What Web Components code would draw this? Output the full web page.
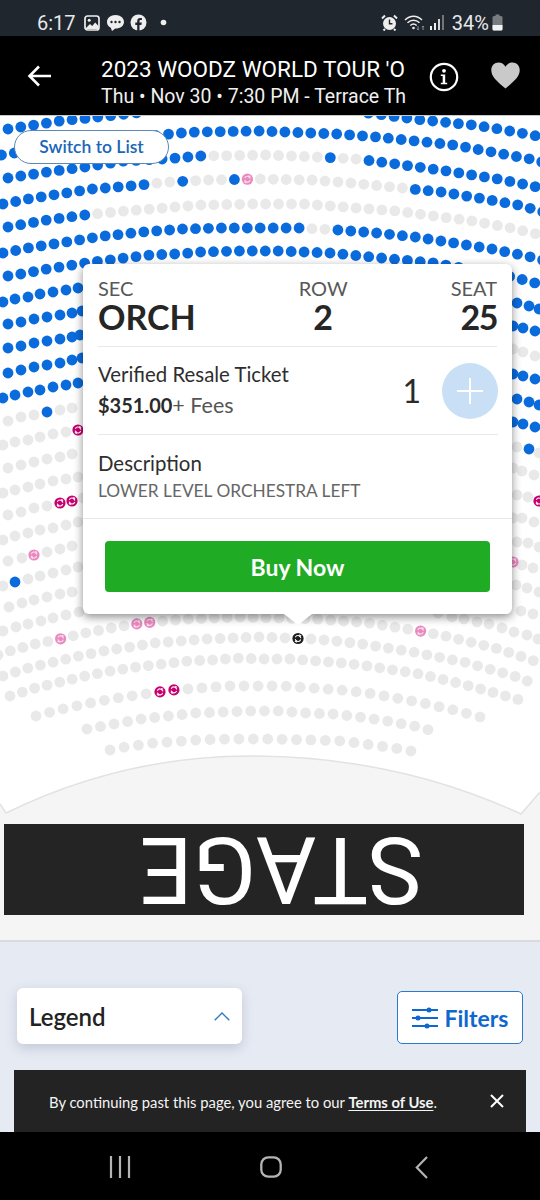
<!DOCTYPE html>
<html>
<head>
<meta charset="utf-8">
<style>
  html, body { margin: 0; padding: 0; }
  body { width: 540px; height: 1200px; overflow: hidden; background: #e6eaf3; font-family: Lato, sans-serif; display: flex; flex-direction: column; }
</style>
</head>
<body>
<status-bar></status-bar>
<event-header></event-header>
<seat-map>
  <seat-card></seat-card>
</seat-map>
<map-controls></map-controls>
<terms-bar></terms-bar>
<nav-bar></nav-bar>

<script>
class StatusBar extends HTMLElement {
  constructor() {
    super();
    this.attachShadow({ mode: "open" });
    this.shadowRoot.innerHTML = `
      <style>
        :host { display: flex; height: 36px; background: #1f262d; color: #e6e8ea; align-items: center; justify-content: space-between; padding: 9px 37px 0; box-sizing: border-box; font: 20px Roboto, sans-serif; flex: none; }
        .side { display: flex; align-items: center; }
        svg { display: block; }
      </style>
      <div class="side">
        <span>6:17</span>
        <svg style="margin-left:8px" width="16" height="16" viewBox="0 0 16 16"><rect x="1" y="1" width="14" height="14" rx="2.5" fill="none" stroke="#eee" stroke-width="1.7"/><circle cx="5.2" cy="5.2" r="1.5" fill="#eee"/><path d="M2 13l4-4 2.2 2 3-3.5L14.5 11v3H2z" fill="#eee"/></svg>
        <svg style="margin-left:6px" width="19" height="18" viewBox="0 0 19 18"><path d="M9.5 1C4.5 1 1 4 1 8c0 2.700 1.500 4.600 3.800 5.800L6 17l3.300-2.500h.2c5 0 8.500-2.700 8.500-6.500S14.500 1 9.500 1z" fill="#eee"/><circle cx="5.500" cy="8" r="1.200" fill="#1f262d"/><circle cx="9.500" cy="8" r="1.200" fill="#1f262d"/><circle cx="13.500" cy="8" r="1.200" fill="#1f262d"/></svg>
        <svg style="margin-left:5px" width="17" height="17" viewBox="0 0 17 17"><circle cx="8.500" cy="8.500" r="8" fill="#eee"/><path d="M7.200 17v-6H5.300V8.600h1.900V7c0-2 1.200-3.100 3-3.100.8 0 1.500.1 1.700.1v2.100h-1.200c-.9 0-1.200.5-1.200 1.200v1.300h2.300L11.400 11H9.500v6z" fill="#1f262d"/></svg>
        <svg style="margin-left:13px" width="7" height="7"><circle cx="3.500" cy="3.500" r="2.800" fill="#eee"/></svg>
      </div>
      <div class="side">
        <svg width="17" height="17" viewBox="0 0 17 17"><circle cx="8.500" cy="9.500" r="6.500" fill="#eee"/><path d="M8.500 5.500v4.300h3" fill="none" stroke="#1f262d" stroke-width="1.400"/><path d="M1 4.500L4 1.500M16 4.500L13 1.500M4 15l-1.500 1.500M13 15l1.500 1.500" stroke="#eee" stroke-width="2"/></svg>
        <svg style="margin-left:6px" width="22" height="17" viewBox="0 0 22 17"><path d="M1 6c5-5 12-5 17 0M3.500 8.800c3.500-3.300 8.500-3.300 12 0M6.300 11.500c2-1.800 4.400-1.800 6.400 0" fill="none" stroke="#eee" stroke-width="1.500"/><circle cx="9.500" cy="14" r="1.300" fill="#eee"/><path d="M14 12v4M13 14.800l1 1.200 1-1.200" fill="none" stroke="#8b9095" stroke-width="1"/><path d="M19 16v-4M18 13.200l1-1.200 1 1.200" fill="none" stroke="#8b9095" stroke-width="1"/></svg>
        <svg style="margin-left:4px" width="15" height="17" viewBox="0 0 15 17"><rect x="0" y="12" width="2" height="4" fill="#eee"/><rect x="4" y="9" width="2" height="7" fill="#eee"/><rect x="8" y="5" width="2" height="11" fill="#d4d6d8"/><rect x="12" y="1" width="2" height="15" fill="#70767b"/></svg>
        <span style="margin-left:7px">34%</span>
        <svg style="margin-left:3px" width="11" height="17" viewBox="0 0 11 17"><rect x="3.500" y="0.500" width="4" height="2" fill="#777c81"/><rect x="0.500" y="2" width="10" height="14.500" rx="1.500" fill="#777c81"/><path d="M0.500 11h10v4a1.500 1.500 0 0 1-1.500 1.500H2A1.500 1.500 0 0 1 .5 15z" fill="#f2f2f2"/></svg>
      </div>`;
  }
}
customElements.define("status-bar", StatusBar);

class EventHeader extends HTMLElement {
  constructor() {
    super();
    this.attachShadow({ mode: "open" });
    this.shadowRoot.innerHTML = `
      <style>
        :host { display: flex; height: 80px; background: #000; color: #fff; align-items: center; box-sizing: border-box; border-bottom: 1px solid #c9c9c9; font-family: Roboto, sans-serif; flex: none; position: relative; z-index: 2; }
        .back { margin-left: 27px; width: 26px; flex: none; display: block; }
        .titles { margin-left: 48px; width: 305px; overflow: hidden; white-space: nowrap; flex: none; padding-top: 15px; }
        .t1 { font-size: 22.500px; line-height: 28px; }
        .t2 { font-size: 19.500px; line-height: 28px; color: #f0f0f0; }
        .info { margin-left: 23px; margin-top: 2px; flex: none; display: block; }
        .heart { margin-left: 32px; flex: none; display: block; }
      </style>
      <svg class="back" height="24" viewBox="0 0 26 24"><path d="M24 12H3M12 2.500L2.500 12l9.500 9.500" fill="none" stroke="#fff" stroke-width="2.600"/></svg>
      <div class="titles">
        <div class="t1">2023 WOODZ WORLD TOUR 'O</div>
        <div class="t2">Thu • Nov 30 • 7:30 PM - Terrace Th</div>
      </div>
      <svg class="info" width="30" height="30" viewBox="0 0 30 30"><circle cx="15" cy="15" r="13.200" fill="none" stroke="#fff" stroke-width="2.200"/><circle cx="15" cy="8.800" r="1.900" fill="#fff"/><path d="M11.800 12.500h4.400v8.200h2v1.600h-6.400v-1.600h1.900v-6.600h-1.900z" fill="#fff"/></svg>
      <svg class="heart" width="29" height="27" viewBox="0 0 29 27"><path d="M14.500 26.500C5 18.500 0.300 14.500 0.300 8 0.300 3.500 3.500.5 7.500.5c3 0 5.500 1.500 7 4.200 1.500-2.700 4-4.200 7-4.200 4 0 7.200 3 7.200 7.500 0 6.500-4.700 10.500-14.200 18.500z" fill="#c9c9c9"/></svg>`;
  }
}
customElements.define("event-header", EventHeader);

// seat colours on the map
const SEAT = { b: "#0a6bdc", g: "#e9e9e9", d: "#c6006f", l: "#e98abf", k: "#1e1e1e" };

// rows that run across the map: pts is the curve, step the distance between seats,
// colors is a list of [up to this x, colour]
const ROWS = [
  { step: 12.95, pts: [[8,129],[60,121],[136,113],[150,110],[270,103],[355,110],[368,113],[422,120],[473,125],[499,129],[537,136],[550,139]], colors: [[999,"b"]] },
  { step: 12.95, pts: [[1.500,155],[14,153],[60,146],[169,134],[195,132],[260,131],[286,132],[338,134],[377,137],[415,141],[454,145],[492,152],[530,159],[550,164]], colors: [[999,"b"]] },
  { step: 12.95, pts: [[8,178],[21,176],[47,172],[85,167],[124,161],[163,159],[201,156],[266,155],[318,157],[357,159],[396,164],[447,171],[498,179],[537,187],[550,190]], colors: [[207,"b"],[325,"g"],[337,"b"],[363,"g"],[999,"b"]] },
  { step: 12.95, pts: [[3,204],[28,199],[53,195],[92,189],[130,186],[169,182],[208,180],[260,179],[312,180],[351,183],[402,188],[441,192],[479,198],[518,205],[540,211],[552,214]], colors: [[150,"b"],[176,"g"],[188,"b"],[228,"g"],[241,"b"],[254,"l"],[408,"g"],[999,"b"]] },
  { step: 12.95, pts: [[8,227],[47,220],[85,215],[124,211],[163,208],[201,205],[253,204],[305,204],[344,207],[396,211],[434,216],[473,221],[511,228],[537,234],[550,237]], colors: [[91,"b"],[999,"g"]] },
  { step: 12.95, pts: [[3,253],[28,248],[66,242],[104,236],[143,232],[182,229],[221,228],[299,228],[338,230],[377,233],[415,237],[454,243],[492,249],[531,257],[550,262]], colors: [[305,"b"],[332,"g"],[999,"b"]] },
  { step: 12.95, pts: [[8,276],[21,274],[47,269],[85,263],[124,258],[150,255],[176,254],[201,252],[240,251],[279,251],[330,253],[382,258],[434,263],[513,277],[535,283],[550,287]], colors: [[999,"b"]] },
  { step: 12.95, pts: [[-2,655],[10,651],[35,644],[60,639],[85,633],[111,628],[136,624],[162,621],[188,619],[239,617],[317,619],[369,623],[394,627],[420,631],[445,636],[470,642],[495,648],[520,656],[546,665]], colors: [[999,"g"]], marks: { 60: "l", 136: "l", 149: "l", 420: "l" } },
  { step: 13, pts: [[3,676],[28,668],[54,662],[79,656],[104,651],[130,647],[155,643],[181,641],[207,639],[233,638],[259,637],[285,638],[311,639],[336,641],[362,644],[388,648],[413,652],[438,657],[464,662],[489,669],[514,676],[538,685]], colors: [[999,"g"]], marks: { 298: "k" } },
  { step: 12.9, pts: [[10,696],[35,688],[60,682],[85,676],[111,671],[136,667],[162,664],[188,661],[213,660],[239,658],[265,659],[291,659],[317,661],[343,663],[368,666],[394,670],[420,674],[445,680],[470,686],[495,693],[520,700]], colors: [[999,"g"]] },
  { step: 14.05, pts: [[36,716],[62,709],[90,703],[117,698],[145,694],[173,690],[201,688],[229,686],[257,686],[284,686],[312,688],[340,690],[368,693],[396,698],[423,703],[450,709],[477,716],[491,720]], colors: [[999,"g"]], marks: { 159: "d", 173: "d" } },
  { step: 13.75, pts: [[87,729],[114,724],[141,719],[168,716],[196,713],[223,712],[250,711],[278,711],[306,713],[333,714],[360,717],[387,721],[414,726],[441,733]], colors: [[999,"g"]] },
  { step: 14.4, pts: [[110,750],[125,747],[139,745],[154,743],[168,742],[197,740],[226,739],[270,739],[314,740],[343,741],[358,743],[372,745],[387,747],[401,749],[416,752]], colors: [[999,"g"]] }
];

// the rows behind the card only show at the two sides, so they are listed seat by seat
const SIDE_SEATS = [
  [3,302],[15,299],[28,297],[40,294],[53,292],[66,290],[78,288],[517,303],[529,306],[539,309],
  [8,324],[21,322],[34,319],[47,317],[60,315],[72,313],[82,311],[513,326],[523,328],[535,331],
  [8,348],[21,346],[34,343],[47,341],[60,339],[72,337],[80,335],
  [8,373],[21,370],[34,367],[47,365],[60,363],[72,360],[82,358],[513,374],[523,376],[535,379],
  [3,398],[15,395],[28,392],[40,390],[53,387],[66,385],[78,383],[517,399],[529,402],[539,405],
  [47,412],[513,422],[523,424],[535,427],[529,449],[15,582]
].map((p) => [p[0], p[1], "b"]).concat([
  [513,349],[523,352],[535,356],
  [8,421],[21,417],[34,415],[60,410],[72,408],
  [3,445],[15,442],[28,440],[40,437],[53,434],[66,432],[517,447],[539,453],
  [8,468],[21,465],[34,462],[47,459],[60,457],[72,454],[513,468],[522,471],[534,475],
  [3,493],[15,490],[28,487],[40,484],[53,481],[66,479],[78,477],[517,495],[528,497],
  [8,515],[21,512],[34,508],[47,506],[83,498],[513,518],[522,518],[534,522],
  [3,540],[15,536],[28,533],[40,530],[53,528],[66,525],[78,522],[517,542],[528,543],[539,547],
  [8,561],[22,558],[47,552],[60,549],[72,546],[522,565],[533,568],
  [3,586],[28,579],[40,576],[53,573],[66,570],[78,567],[516,585],[527,588],[539,592],
  [9,607],[22,603],[34,600],[47,597],[60,594],[72,592],[521,611],[533,614],
  [3,631],[16,627],[28,624],[41,621],[53,618],[66,615],[79,612],
  [438,613],[452,617],[464,619],[477,622],[489,624],[502,628],[514,632],[527,635],[538,639]
].map((p) => [p[0], p[1], "g"])).concat([
  [78,430,"d"],[60,503,"d"],[72,501,"d"],[539,501,"d"],[34,555,"l"],[513,562,"l"]
]);

function walkRow(row) {
  const seats = [];
  let left = 0;
  for (let i = 1; i < row.pts.length; i++) {
    const [x0, y0] = row.pts[i - 1];
    const [x1, y1] = row.pts[i];
    const len = Math.hypot(x1 - x0, y1 - y0);
    let d = left;
    while (d < len) {
      seats.push([x0 + (x1 - x0) * d / len, y0 + (y1 - y0) * d / len]);
      d += row.step;
    }
    left = d - len;
  }
  return seats.map(([x, y]) => {
    const hit = row.colors.find((c) => x <= c[0]);
    let c = hit ? hit[1] : "g";
    for (const m in row.marks || {}) {
      if (Math.abs(x - m) < row.step / 2) c = row.marks[m];
    }
    return [x, y, c];
  });
}

function seatSvg([x, y, c]) {
  const px = x.toFixed(1), py = y.toFixed(1);
  if (c === "b" || c === "g") return `<circle cx="${px}" cy="${py}" r="5.400" fill="${SEAT[c]}"/>`;
  const ring = c === "l" ? "#fbdfee" : "#fff";
  return `<g transform="translate(${px} ${py})"><circle r="5.600" fill="${SEAT[c]}"/><circle r="2.900" fill="none" stroke="${ring}" stroke-width="1.100" stroke-dasharray="7.200 1.900" transform="rotate(20)"/><path d="M1.200-4.200l2.400 1.400-2.400 1.200zM-1.200 4.200l-2.400-1.400 2.400-1.200z" fill="${ring}"/></g>`;
}

class SeatMap extends HTMLElement {
  constructor() {
    super();
    this.attachShadow({ mode: "open" });
    const seats = ROWS.flatMap(walkRow).concat(SIDE_SEATS);
    this.shadowRoot.innerHTML = `
      <style>
        :host { display: block; height: 826px; background: #fff; position: relative; overflow: hidden; flex: none; border-bottom: 2px solid #d9d9de; box-sizing: border-box; }
        svg { position: absolute; left: 0; top: 0; }
        .switch { position: absolute; left: 14px; top: 14px; width: 155px; height: 34px; box-sizing: border-box; padding-bottom: 2px; border: 1.500px solid #5c89b3; border-radius: 17px; background: #fff; color: #1a66b8; font: 600 17.500px Lato, sans-serif; display: flex; align-items: center; justify-content: center; }
        stage-block { position: relative; margin: 708px 0 0 4px; }
      </style>
      <svg width="540" height="826" viewBox="0 116 540 826">
        <path d="M0 804L6 813C90 772 170 756 250 756C340 756 430 772 521 814L540 792V942H0z" fill="#f5f5f5"/>
        <path d="M0 804L6 813C90 772 170 756 250 756C340 756 430 772 521 814L540 792" fill="none" stroke="#e2e2e2" stroke-width="1.500"/>
        ${seats.map(seatSvg).join("")}
      </svg>
      <div class="switch">Switch to List</div>
      <stage-block></stage-block>
      <slot></slot>`;
  }
}
customElements.define("seat-map", SeatMap);

class StageBlock extends HTMLElement {
  constructor() {
    super();
    this.attachShadow({ mode: "open" });
    this.shadowRoot.innerHTML = `
      <style>
        :host { display: flex; width: 520px; height: 91px; background: #242424; color: #fff; align-items: center; justify-content: center; }
        span { display: block; font: 93px/91px Roboto, sans-serif; transform: rotate(180deg); margin-left: 36px; }
      </style>
      <span>STAGE</span>`;
  }
}
customElements.define("stage-block", StageBlock);

class SeatCard extends HTMLElement {
  constructor() {
    super();
    this.attachShadow({ mode: "open" });
    this.shadowRoot.innerHTML = `
      <style>
        :host { display: block; position: absolute; left: 83px; top: 148px; width: 429px; height: 350px; background: #fff; border-radius: 6px; box-shadow: 0 3px 10px rgba(0,0,0,.45); box-sizing: border-box; font-family: Lato, sans-serif; color: #2a2a2a; z-index: 1; }
        :host::after { content: ""; position: absolute; left: 201px; top: 350px; border: 14px solid transparent; border-top: 11px solid #fff; border-bottom: 0; }
        .seat { display: flex; justify-content: space-between; margin: 0 15px; height: 83px; box-sizing: border-box; padding-top: 13px; border-bottom: 1px solid #e8e8e8; }
        .col { display: flex; flex-direction: column; }
        .col.mid { align-items: center; }
        .col.end { align-items: flex-end; }
        .lab { font-size: 20px; line-height: 22px; color: #585858; }
        .val { font-size: 34px; line-height: 36px; font-weight: 700; color: #262626; }
        .num { letter-spacing: -1.500px; }
        .price { display: flex; align-items: center; justify-content: space-between; margin: 0 14px 0 15px; height: 88px; box-sizing: border-box; border-bottom: 1px solid #e8e8e8; }
        .name { font-size: 20.400px; line-height: 30px; color: #2e2e2e; margin-top: -2px; }
        .amt { font-size: 21.500px; line-height: 32px; color: #555; }
        .amt b { color: #2a2a2a; font-size: 20px; }
        .qty { display: flex; align-items: center; gap: 21px; font-size: 32px; }
        .plus { width: 56px; height: 56px; border-radius: 50%; background: #c8dff5; display: flex; align-items: center; justify-content: center; }
        .desc { height: 84px; box-sizing: border-box; padding: 14px 15px 0; border-bottom: 1px solid #e8e8e8; }
        .dt { font-size: 20.400px; line-height: 28px; color: #2e2e2e; }
        .dd { font-size: 17.300px; line-height: 27px; color: #666; }
        .buy { margin: 22px 22px 0 22px; height: 51px; border-radius: 4px; background: #1fab24; color: #fff; font-size: 23px; font-weight: 700; display: flex; align-items: center; justify-content: center; }
      </style>
      <div class="seat">
        <div class="col"><span class="lab">SEC</span><span class="val">ORCH</span></div>
        <div class="col mid"><span class="lab">ROW</span><span class="val">2</span></div>
        <div class="col end"><span class="lab">SEAT</span><span class="val num">25</span></div>
      </div>
      <div class="price">
        <div>
          <div class="name">Verified Resale Ticket</div>
          <div class="amt"><b>$351.00</b>+ Fees</div>
        </div>
        <div class="qty">
          <span>1</span>
          <div class="plus"><svg width="26" height="26"><path d="M13 0v26M0 13h26" stroke="#fff" stroke-width="2"/></svg></div>
        </div>
      </div>
      <div class="desc">
        <div class="dt">Description</div>
        <div class="dd">LOWER LEVEL ORCHESTRA LEFT</div>
      </div>
      <div class="buy">Buy Now</div>`;
  }
}
customElements.define("seat-card", SeatCard);

class MapControls extends HTMLElement {
  constructor() {
    super();
    this.attachShadow({ mode: "open" });
    this.shadowRoot.innerHTML = `
      <style>
        :host { display: flex; height: 128px; box-sizing: border-box; padding: 46px 17px 26px; justify-content: space-between; align-items: flex-end; background: #e6eaf3; font-family: Lato, sans-serif; flex: none; }
        .legend { width: 225px; height: 56px; box-sizing: border-box; padding: 0 12px; background: #fff; border-radius: 6px; box-shadow: 0 4px 12px rgba(70,80,110,.22); display: flex; align-items: center; justify-content: space-between; font-size: 24px; font-weight: 600; color: #222; }
        .filters { width: 126px; height: 53px; box-sizing: border-box; background: #fff; border: 1.500px solid #2d78c8; border-radius: 5px; display: flex; align-items: center; justify-content: center; gap: 7px; font-size: 23px; font-weight: 700; color: #0f68cf; }
      </style>
      <div class="legend">Legend
        <svg width="16" height="9" viewBox="0 0 16 9"><path d="M.7 8.300L8 1l7.300 7.300" fill="none" stroke="#2d78c8" stroke-width="1.400"/></svg>
      </div>
      <div class="filters">
        <svg width="26" height="24" viewBox="0 0 26 24"><path d="M0 4h26M0 12h26M0 20h26" stroke="#0f68cf" stroke-width="2.200"/><circle cx="17" cy="4" r="2.500" fill="#0f68cf"/><circle cx="6" cy="12" r="2.500" fill="#0f68cf"/><circle cx="15" cy="20" r="2.500" fill="#0f68cf"/></svg>
        Filters
      </div>`;
  }
}
customElements.define("map-controls", MapControls);

class TermsBar extends HTMLElement {
  constructor() {
    super();
    this.attachShadow({ mode: "open" });
    this.shadowRoot.innerHTML = `
      <style>
        :host { display: flex; height: 62px; margin: 0 14px; background: #232323; color: #f4f4f4; align-items: center; padding: 2px 22px 0 35px; box-sizing: border-box; justify-content: space-between; font: 14.800px Lato, sans-serif; flex: none; }
        b { text-decoration: underline; text-underline-offset: 2px; }
        svg { display: block; margin-bottom: 2px; }
      </style>
      <span>By continuing past this page, you agree to our <b>Terms of Use</b>.</span>
      <svg width="14" height="14"><path d="M1 1l12 12M13 1L1 13" stroke="#fff" stroke-width="2"/></svg>`;
  }
}
customElements.define("terms-bar", TermsBar);

class NavBar extends HTMLElement {
  constructor() {
    super();
    this.attachShadow({ mode: "open" });
    this.shadowRoot.innerHTML = `
      <style>
        :host { display: flex; height: 68px; background: #000; box-sizing: border-box; padding: 24px 0 0 109px; align-items: flex-start; flex: none; }
        .home { margin-left: 129px; }
        .back { margin-left: 133px; }
      </style>
      <svg width="22" height="22"><path d="M2 0v22M11 0v22M20 0v22" stroke="#b4b4b4" stroke-width="2.200"/></svg>
      <svg class="home" width="22" height="22"><rect x="1.300" y="1.300" width="19.400" height="19.400" rx="7" fill="none" stroke="#b4b4b4" stroke-width="2.300"/></svg>
      <svg class="back" width="13" height="23"><path d="M12 1L1.800 11.500 12 22" fill="none" stroke="#b4b4b4" stroke-width="2.200"/></svg>`;
  }
}
customElements.define("nav-bar", NavBar);
</script>
</body>
</html>
